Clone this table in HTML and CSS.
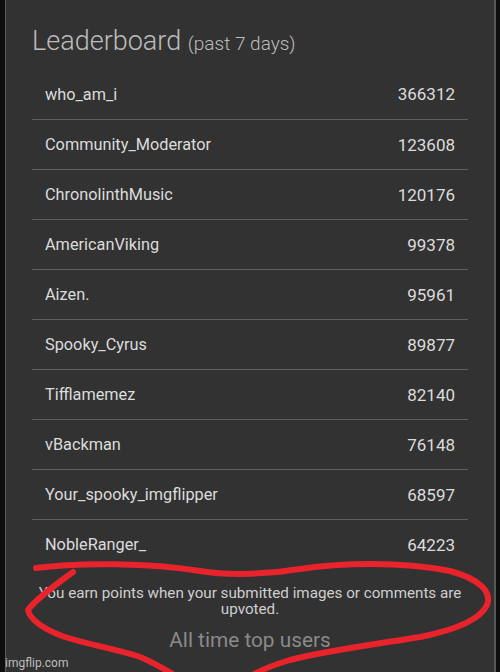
FILE: index.html
```html
<!DOCTYPE html>
<html lang="en">
<head>
  <meta charset="UTF-8">
  <title>Leaderboard</title>
  <link rel="stylesheet" href="styles.css">
</head>
<body>
  <div class="panel">
    <h2 class="title">Leaderboard <span class="sub">(past 7 days)</span></h2>

    <div class="board">
      <div class="row"><span class="name">who_am_i</span><span class="points">366312</span></div>
      <div class="row"><span class="name">Community_Moderator</span><span class="points">123608</span></div>
      <div class="row"><span class="name">ChronolinthMusic</span><span class="points">120176</span></div>
      <div class="row"><span class="name">AmericanViking</span><span class="points">99378</span></div>
      <div class="row"><span class="name">Aizen.</span><span class="points">95961</span></div>
      <div class="row"><span class="name">Spooky_Cyrus</span><span class="points">89877</span></div>
      <div class="row"><span class="name">Tifflamemez</span><span class="points">82140</span></div>
      <div class="row"><span class="name">vBackman</span><span class="points">76148</span></div>
      <div class="row"><span class="name">Your_spooky_imgflipper</span><span class="points">68597</span></div>
      <div class="row"><span class="name">NobleRanger_</span><span class="points">64223</span></div>
    </div>

    <p class="note">You earn points when your submitted images or comments are upvoted.</p>
    <div class="all-time">All time top users</div>
  </div>

  <div class="watermark">imgflip.com</div>

  <svg class="scribble" width="500" height="672" viewBox="0 0 500 672">
    <path d="M36,568 C80,562 150,563 200,571 C230,576 270,574 300,569 C340,563 400,561 450,571 C480,579 492,592 487,605 C480,620 455,630 420,637 C370,645 320,652 290,660 C270,666 255,672 245,680"
          fill="none" stroke="#e8232b" stroke-width="6" stroke-linecap="round" stroke-linejoin="round"/>
    <path d="M73,572 C55,585 35,600 28,610 C30,620 45,630 65,637 C90,645 120,650 140,657 C155,663 170,672 190,685"
          fill="none" stroke="#e8232b" stroke-width="6" stroke-linecap="round" stroke-linejoin="round"/>
  </svg>
</body>
</html>
```

FILE: styles.css
```css
body {
  margin: 0;
  background-color: #0e0e0e;
  font-family: Roboto, 'Liberation Sans', sans-serif;
  height: 672px;
  overflow: hidden;
  position: relative;
}
.panel {
  margin: 0 4px 0 5px;
  height: 672px;
  box-sizing: border-box;
  background-color: #323232;
  border-left: 1px solid #5c5c5c;
  border-right: 2px solid #575757;
  padding: 26px 26px 0 26px;
}
.title {
  margin: 0 0 10px 0;
  font-size: 27px;
  line-height: 30px;
  font-weight: 300;
  color: #bdbdbd;
}
.sub {
  font-size: 19px;
}
.board {
  display: flex;
  flex-direction: column;
}
.row {
  display: flex;
  justify-content: space-between;
  align-items: center;
  height: 50px;
  box-sizing: border-box;
  padding: 0 13px;
  border-top: 1px solid #5f5f5f;
}
.row:first-child {
  border-top: none;
}
.name {
  font-size: 16.3px;
  color: #dcdcdc;
}
.points {
  font-size: 17px;
  color: #dcdcdc;
}
.note {
  margin: 16px 0 0 0;
  font-size: 15.2px;
  line-height: 16px;
  text-align: center;
  color: #cfcfcf;
}
.all-time {
  margin-top: 11px;
  font-size: 20.8px;
  line-height: 24px;
  text-align: center;
  color: #8a8a8a;
}
.watermark {
  position: absolute;
  left: 5px;
  bottom: 2px;
  font-size: 12px;
  color: #bdbdbd;
}
.scribble {
  position: absolute;
  top: 0;
  left: 0;
  pointer-events: none;
}
```
